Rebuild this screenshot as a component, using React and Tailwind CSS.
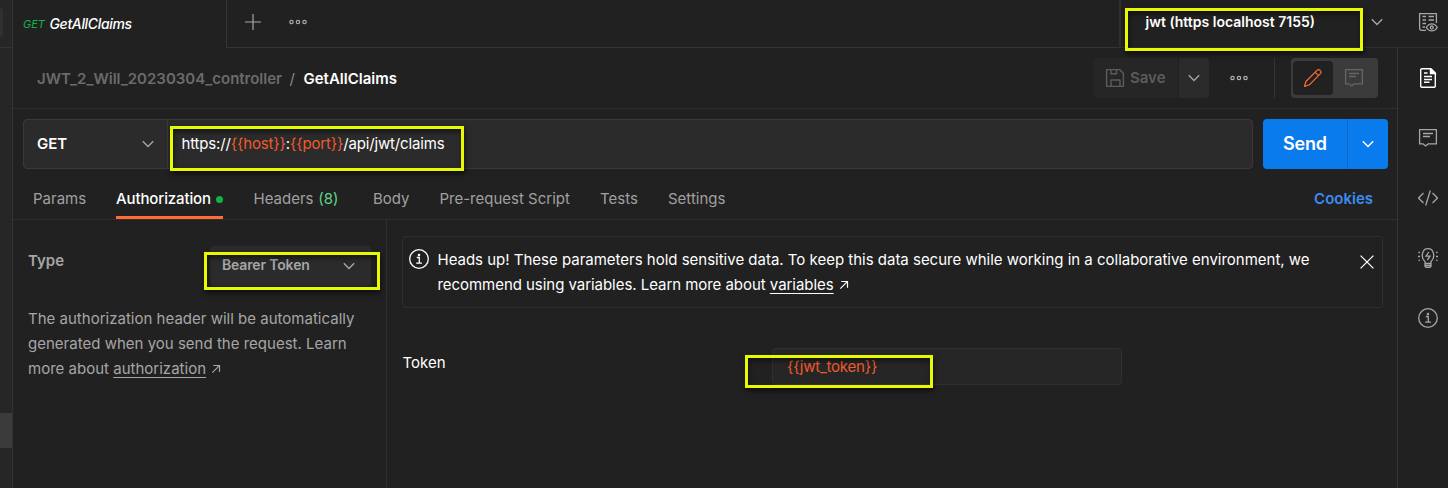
import React from "react";

function Icon({ size = 20, className = "", children, sw = 1.2 }) {
  return (
    <svg width={size} height={size} viewBox={`0 0 ${size} ${size}`} fill="none" stroke="currentColor" strokeWidth={sw} className={`block shrink-0 ${className}`}>
      {children}
    </svg>
  );
}

const Chevron = ({ className }) => (
  <Icon size={12} className={className} sw={1.4}><path d="M.8 3.200 6 8.400l5.200-5.200" /></Icon>
);

const Dots = ({ className }) => (
  <svg width="18" height="6" viewBox="0 0 18 6" fill="none" stroke="currentColor" strokeWidth="1.2" className={`block shrink-0 ${className}`}>
    <circle cx="2.500" cy="3" r="1.700" /><circle cx="9" cy="3" r="1.700" /><circle cx="15.500" cy="3" r="1.700" />
  </svg>
);

const Comment = ({ className }) => (
  <Icon className={className} sw={1.300}>
    <path d="M1.600 1.600h16.800v14.300H10l-2.400 2-2.400-2H1.600z" strokeLinejoin="round" />
    <path d="M5 5.500h10M5 8.500h7" />
  </Icon>
);

const Info = ({ className }) => (
  <Icon className={className} sw={1.300}>
    <circle cx="10" cy="10" r="9.300" />
    <path d="M7.800 8.500h2.500v5.500M7.200 14.200h5.800" />
    <circle cx="10" cy="5.900" r=".6" fill="currentColor" />
  </Icon>
);

const Arrow = ({ className }) => (
  <Icon size={10} className={className} sw={1.200}><path d="M1.300 8.700l7-7M2.300 1.500h6.200v6.200" /></Icon>
);

function Tab({ className, children }) {
  return <div className={`h-full shrink-0 pt-[10px] ${className}`}>{children}</div>;
}

const Mark = ({ className }) => (
  <div className={`pointer-events-none absolute border-3 border-[#e6fa00] shadow-[1px_3px_5px_rgba(0,0,0,0.6),inset_1px_3px_5px_rgba(0,0,0,0.5)] ${className}`} />
);

function TopBar() {
  return (
    <header className="flex h-12 shrink-0">
      <div className="flex w-[214px] shrink-0 border-r border-[#343434] pl-[10px] italic leading-[20px]">
        <span className="w-[26.500px] pt-[14px] text-[11px] text-[#12b24a]">GET</span>
        <span className="pt-[14px] text-[14px] font-medium tracking-[-0.340px] text-white">GetAllClaims</span>
      </div>
      <div className="flex flex-1 border-b border-[#343434] text-[#a6a6a6]">
        <Icon size={16} className="mt-[14px] ml-[18px]"><path d="M8 0v16M0 8h16" /></Icon>
        <Dots className="mt-[19px] ml-[28px]" />
      </div>
      <div className="flex w-[329px] shrink-0 border-b border-l-2 border-[#303030] pl-[24.500px]">
        <span className="w-[225.500px] pt-[12px] text-[14px] leading-[20px] font-semibold text-white">jwt (https localhost 7155)</span>
        <Chevron className="mt-[16px] text-[#a6a6a6]" />
        <Icon className="mt-[12px] ml-[35px] text-[#a6a6a6]" sw={1.300}>
          <path d="M8 18.300H3.600a2 2 0 0 1-2-2V1.600h16.800V11M4.500 4.500h3.500M10.500 4.500h5.500M4.500 8h3.500M10.500 8h5.500M4.500 11.500h3.500M4.500 15h2.500" />
          <path d="M8.300 15.500c2.800-4.800 8.200-4.800 11 0-2.800 4.600-8.200 4.600-11 0z" /><circle cx="13.800" cy="15.500" r="1.500" />
        </Icon>
      </div>
    </header>
  );
}

function TitleRow() {
  return (
    <div className="flex h-[61px] shrink-0 border-b border-[#303030] pl-6 text-[15px] leading-[20px] font-semibold">
      <span className="w-[252.500px] pt-[21px] text-[#6b6b6b]">JWT_2_Will_20230304_controller</span>
      <span className="w-[14px] pt-[21px] font-normal text-[#8a8a8a]">/</span>
      <span className="pt-[21px] text-white">GetAllClaims</span>
      <div className="mt-[10px] ml-auto flex h-10">
        <div className="flex w-[85px] items-center rounded-l bg-[#262626] pl-3 text-[#5c5c5c]">
          <Icon size={20} sw={1.400}><path d="M1.600 1.600h13l3.800 3.800v13H1.600zM6 1.800v4h5.500v-4M6 18.300v-6.300h9v6.300" strokeLinejoin="round" /></Icon>
          <span className="ml-[5px] text-[#5c5c5c]">Save</span>
        </div>
        <div className="ml-px flex w-[30px] items-center justify-center rounded-r bg-[#2b2b2b] text-[#a6a6a6]"><Chevron /></div>
        <div className="flex w-[66px] items-center border-r border-[#343434] pl-[21px] text-[#b0b0b0]"><Dots /></div>
        <div className="mr-[19px] ml-4 flex w-[87px] rounded bg-[#3b3b3b] p-[2px]">
          <div className="my-px flex w-10 items-center justify-center rounded bg-[#212121] text-[#ff6c37]">
            <Icon size={20}><path d="m1.500 18.500 1.400-5L14.200 2.100q1.600-1.200 3 .3 1.500 1.500.4 3L6.400 16.800zM12 4.200l3.700 3.700M14 2.300" strokeLinejoin="round" /></Icon>
          </div>
          <div className="flex flex-1 items-center justify-center pr-[2px] text-[#666666]"><Comment /></div>
        </div>
      </div>
    </div>
  );
}

function UrlRow() {
  return (
    <div className="flex h-[60px] shrink-0 pt-[10px] pl-[10px] text-[15px]">
      <div className="flex w-[1230px] rounded border border-[#393939] bg-[#2b2b2b]">
        <div className="flex w-[144px] items-center border-r border-[#393939] pl-[13px]">
          <span className="w-[105px] font-semibold text-white">GET</span>
          <Chevron className="text-[#a6a6a6]" />
        </div>
        <div className="flex items-center pl-[13.500px] tracking-[-0.160px] whitespace-nowrap text-white">
          https://<span className="text-[#f15a2b]">{"{{host}}"}</span>:<span className="text-[#f15a2b]">{"{{port}}"}</span>/api/jwt/claims
        </div>
      </div>
      <div className="ml-[10px] flex w-[125px] rounded bg-[#097bed] text-white">
        <div className="flex w-[85px] items-center justify-center border-r border-[#0a69cc] pb-px text-[18px] font-semibold tracking-[-0.200px]">Send</div>
        <div className="flex flex-1 items-center justify-center"><Chevron /></div>
      </div>
    </div>
  );
}

function RequestTabs() {
  return (
    <nav className="flex h-[51px] shrink-0 border-b border-[#303030] pl-5 pt-[10px] text-[15px] leading-[20px] text-[#a0a0a0]">
      <Tab className="w-[83px]">Params</Tab>
      <div className="mr-[30.500px] flex h-10 w-[107px] items-start border-b-3 border-[#ff6c37] pt-[10px] font-medium tracking-[-0.120px] text-white">
        Authorization<i className="mt-[7px] ml-auto size-[7px] rounded-full bg-[#12b24a]" />
      </div>
      <Tab className="w-[119.500px]">Headers <span className="ml-[0.500px] text-[#5fd68a]">(8)</span></Tab>
      <Tab className="w-[66.500px]">Body</Tab>
      <Tab className="w-[160.500px]">Pre-request Script</Tab>
      <Tab className="w-[68px]">Tests</Tab>
      <Tab>Settings</Tab>
      <Tab className="mr-[24px] ml-auto font-semibold text-[#3b8cf5]">Cookies</Tab>
    </nav>
  );
}

function AuthPanel() {
  return (
    <div className="flex flex-1 text-[15px] leading-[25px]">
      <section className="w-[374px] shrink-0 border-r border-[#303030] pl-[15px] text-[#a6a6a6]">
        <div className="flex pt-[26px]">
          <span className="w-[182px] pt-[2px] font-semibold">Type</span>
          <div className="flex h-10 w-[161px] items-center rounded bg-[#2b2b2b] pl-3 text-[14px] font-semibold">
            <span className="w-[121px] pb-[3px] tracking-[-0.150px]">Bearer Token</span>
            <Chevron />
          </div>
        </div>
        <p className="mt-[20px] whitespace-nowrap tracking-[0.010px]">
          The authorization header will be automatically<br />generated when you send the request. Learn<br />more about{" "}
          <a className="underline underline-offset-[3px]">authorization</a><Arrow className="ml-[5px] inline-block! align-baseline" />
        </p>
      </section>
      <section className="flex-1 text-white">
        <div className="mt-4 ml-[15px] flex h-[72px] w-[981px] rounded border border-[#303030] pl-[6px]">
          <Info className="mt-[12px]" />
          <p className="ml-[8.500px] pt-[10px] whitespace-nowrap">
            <span className="tracking-[-0.008px]">Heads up! These parameters hold sensitive data. To keep this data secure while working in a collaborative environment, we</span><br />
            <span className="tracking-[-0.045px]">recommend using variables. Learn more about{" "}
            <a className="underline underline-offset-[3px]">variables</a></span><Arrow className="ml-[5px] inline-block! align-baseline" />
          </p>
          <Icon size={14} className="mt-[18px] mr-2 ml-auto" sw={1.300}><path d="M.6.6l12.800 12.800M13.400.6.600 13.400" /></Icon>
        </div>
        <div className="mt-10 ml-[15.500px] flex">
          <span className="w-[369.500px] pt-[2px]">Token</span>
          <div className="h-[37px] w-[350px] rounded border border-[#303030] bg-[#262626] pt-[5px] pl-[14px] tracking-[-0.220px] text-[#f15a2b]">{"{{jwt_token}}"}</div>
        </div>
      </section>
    </div>
  );
}

function SideRail() {
  return (
    <aside className="flex w-[51px] shrink-0 flex-col items-center gap-10 border-l border-[#343434] pt-5 pl-[10px] text-[#a6a6a6]">
      <Icon className="text-white" sw={1.400}>
        <path d="M3.500.7h9.500L17.300 5v13.500l-.8.800h-13l-.8-.8v-17z" strokeLinejoin="round" /><path d="M12.500 1v4.500h4.500z" fill="currentColor" /><path d="M6 5h3.500M6 8.500h8M6 11.500h8M6 14.300h5.500" />
      </Icon>
      <Comment />
      <Icon sw={1.300}><path d="m5.500 5-5 5 5 5M14.500 5l5 5-5 5M12.300 2.500l-4.600 15" /></Icon>
      <Icon sw={1.300}>
        <path d="M7 15.500v-2C2.300 9.500 4 .7 10 .7s7.700 8.800 3 12.800v2zM7 15.500v2.800l1 1h4l1-1v-2.800M7 17.500h6M10.800 4 8 8.200h4L9.300 12M.3 4.200l1.700.5M0 8.500h2M.3 12.500l1.700-.5M19.700 4.200l-1.700.5M18 8.500h2M19.700 12.500l-1.700-.5" />
      </Icon>
      <Info />
    </aside>
  );
}

export default function App() {
  return (
    <div className="relative flex h-[488px] w-[1448px] overflow-hidden bg-[#212121] font-['Inter',sans-serif]">
      <div className="flex w-[13px] shrink-0 flex-col border-r border-[#343434] bg-[#262626]">
        <div className="h-12 border-b border-[#343434] pt-2"><div className="h-[29px] w-[3px] rounded-r bg-[#303030]" /></div>
        <div className="mt-[365px] h-[35px] bg-[#3b3b3b]" />
      </div>
      <div className="flex flex-1 flex-col">
        <TopBar />
        <div className="flex flex-1">
          <main className="flex w-[1384px] shrink-0 flex-col">
            <TitleRow />
            <UrlRow />
            <RequestTabs />
            <AuthPanel />
          </main>
          <SideRail />
        </div>
      </div>
      <Mark className="top-2 left-[1125px] h-[43px] w-[238px]" />
      <Mark className="top-[126px] left-[170px] h-[45px] w-[294px]" />
      <Mark className="top-[252px] left-[204px] h-[38px] w-[176px]" />
      <Mark className="top-[355px] left-[745px] h-[33px] w-[188px]" />
    </div>
  );
}
